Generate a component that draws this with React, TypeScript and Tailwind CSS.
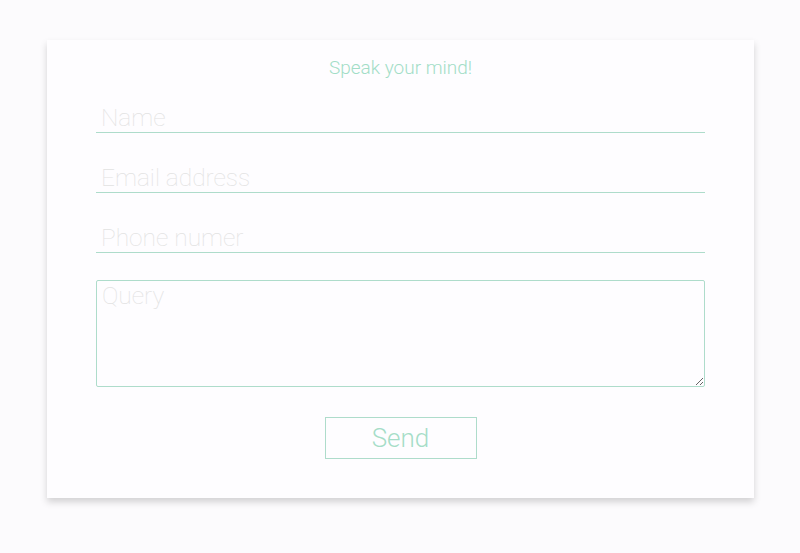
export default function App() {
    return (
        <div className="min-h-[553px] w-full bg-[#fcfbfd] pt-[40px] font-['Roboto',sans-serif]">
            <div className="ml-[47px] flex w-[707px] flex-col items-center bg-[#fefdff] px-[49px] pb-[39px] pt-[14px] shadow-[0_4px_7px_rgba(0,0,0,0.17)]">
                <h2 className="text-[19px] font-light leading-[27px] text-[#a3ddc7]">
                    Speak your mind!
                </h2>

                <form className="mt-[21px] flex w-full flex-col items-center">
                    <input
                        type="text"
                        placeholder="Name"
                        className="h-[31px] w-full border-b border-[#aedccb] bg-transparent px-[5px] pt-[3px] text-[24.5px] font-thin outline-none placeholder:text-[#e2e2e2]"
                    />
                    <input
                        type="email"
                        placeholder="Email address"
                        className="mt-[29px] h-[31px] w-full border-b border-[#aedccb] bg-transparent px-[5px] pt-[3px] text-[24.5px] font-thin outline-none placeholder:text-[#e2e2e2]"
                    />
                    <input
                        type="tel"
                        placeholder="Phone numer"
                        className="mt-[29px] h-[31px] w-full border-b border-[#aedccb] bg-transparent px-[5px] pt-[3px] text-[24.5px] font-thin outline-none placeholder:text-[#e2e2e2]"
                    />
                    <textarea
                        placeholder="Query"
                        className="mt-[27px] h-[107px] w-full rounded-[2px] border border-[#aedccb] bg-transparent px-[5px] py-0 text-[24.5px] font-thin leading-[30px] outline-none placeholder:text-[#e2e2e2]"
                    />
                    <button
                        type="button"
                        className="mt-[30px] h-[42px] w-[152px] border border-[#aedccb] text-[26px] font-light leading-none text-[#a6ddc8]"
                    >
                        Send
                    </button>
                </form>
            </div>
        </div>
    );
}
